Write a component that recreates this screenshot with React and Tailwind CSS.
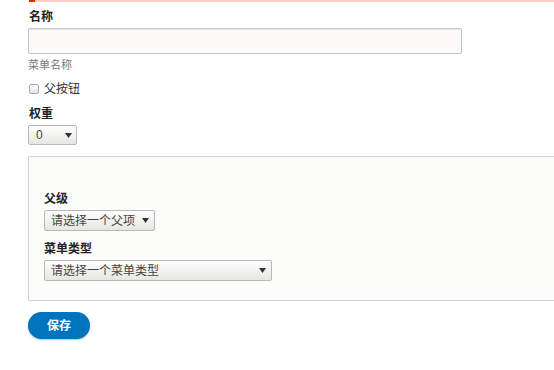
import React from "react";

const Arrow = () => (
  <svg width="7" height="5" viewBox="0 0 7 5" className="shrink-0">
    <path d="M0 0 L7 0 L3.5 5 Z" fill="#333" />
  </svg>
);

const FakeSelect = ({ text, className = "" }) => (
  <div
    className={`flex items-center justify-between pl-[6px] pr-[5px] border border-[#b8b8b8] rounded-[2px] bg-gradient-to-b from-[#fefefe] to-[#e6e6e1] text-[12px] text-[#444] shadow-[inset_0_1px_0_#fff] ${className}`}
  >
    <span className="whitespace-nowrap">{text}</span>
    <Arrow />
  </div>
);

export default function App() {
  return (
    <div
      className="w-[554px] h-[370px] bg-white overflow-hidden text-[#222]"
      style={{ fontFamily: '"Liberation Sans", "Noto Sans CJK SC", sans-serif' }}
    >
      {/* 消息框底边 */}
      <div className="ml-[29px] h-[2px] flex">
        <div className="w-[6px] bg-[#e62600]" />
        <div className="flex-1 bg-[#f9cfc4]" />
      </div>

      <div className="pl-[28px] pt-[7px]">
        <label className="block text-[12px] font-bold leading-[16px] pl-[1px]">名称</label>
        <div className="mt-[3px] w-[434px] h-[26px] border border-[#c3c3c3] rounded-[2px] bg-[#fbfaf8] shadow-[inset_0_1px_1px_rgba(0,0,0,0.08)]" />
        <div className="mt-[3px] text-[11px] leading-[16px] text-[#777]">菜单名称</div>

        <div className="mt-[8px] flex items-center gap-[5px] pl-[1px]">
          <div className="w-[10px] h-[10px] border border-[#aaa] rounded-[2px] bg-gradient-to-b from-[#fff] to-[#e4e4e4]" />
          <span className="text-[12px] leading-[16px] text-[#333]">父按钮</span>
        </div>

        <label className="mt-[9px] block text-[12px] font-bold leading-[16px] pl-[1px]">权重</label>
        <FakeSelect text="0" className="mt-[3px] w-[49px] h-[20px] !pl-[7px] !pr-[4px]" />

        <div className="mt-[11px] h-[145px] border border-[#d3d3d3] rounded-l-[2px] border-r-0 bg-[#fcfcfa] pl-[15px] pt-[34px]">
          <label className="block text-[12px] font-bold leading-[16px]">父级</label>
          <FakeSelect text="请选择一个父项" className="mt-[3px] w-[111px] h-[21px]" />
          <label className="mt-[10px] block text-[12px] font-bold leading-[16px]">菜单类型</label>
          <FakeSelect text="请选择一个菜单类型" className="mt-[3px] w-[228px] h-[21px]" />
        </div>

        <button className="mt-[11px] w-[62px] h-[27px] rounded-full bg-[#0073bd] text-white text-[12px] font-bold shadow-[0_1px_2px_rgba(0,0,0,0.25)]">
          保存
        </button>
      </div>
    </div>
  );
}
